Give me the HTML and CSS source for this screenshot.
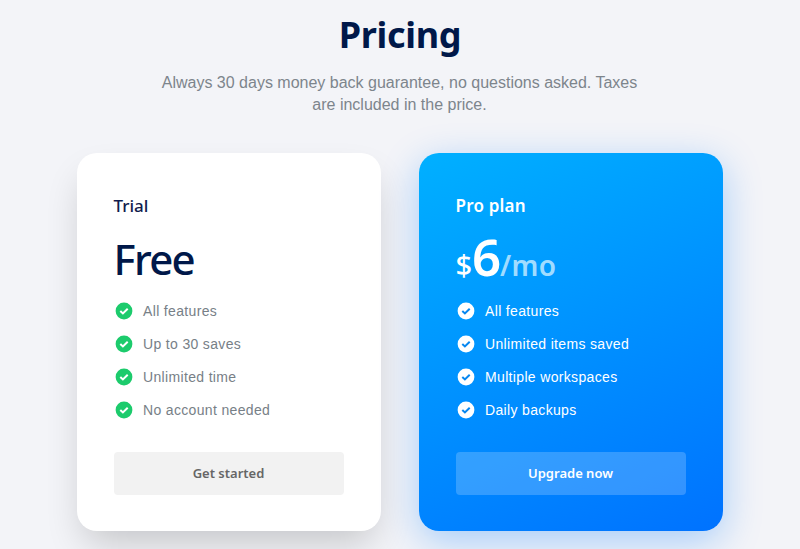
FILE: index.html
```html
<!DOCTYPE html>
<html lang="en">
  <head>
    <meta charset="UTF-8" />
    <meta name="viewport" content="width=device-width, initial-scale=1.0" />
    <title>Pricing</title>
    <link rel="stylesheet" href="styles.css">
  </head>
  <body>
    <svg width="0" height="0" class="sprite">
      <symbol id="check" viewBox="0 0 18 18">
        <circle cx="9" cy="9" r="8.4" fill="currentColor" />
        <path class="tick" d="M5.3 9l2.6 2.4 4.8-4.6" />
      </symbol>
    </svg>

    <div class="header">
      <h1>Pricing</h1>
      <p>Always 30 days money back guarantee, no questions asked. Taxes are included in the price.</p>
    </div>

    <div class="plans">
      <div class="card">
        <h2>Trial</h2>
        <div class="price">Free</div>
        <ul>
          <li><svg><use href="#check" /></svg>All features</li>
          <li><svg><use href="#check" /></svg>Up to 30 saves</li>
          <li><svg><use href="#check" /></svg>Unlimited time</li>
          <li><svg><use href="#check" /></svg>No account needed</li>
        </ul>
        <button class="btn">Get started</button>
      </div>

      <div class="card pro">
        <h2>Pro plan</h2>
        <div class="price"><span class="currency">$</span><span class="amount">6</span><span class="period">/mo</span></div>
        <ul>
          <li><svg><use href="#check" /></svg>All features</li>
          <li><svg><use href="#check" /></svg>Unlimited items saved</li>
          <li><svg><use href="#check" /></svg>Multiple workspaces</li>
          <li><svg><use href="#check" /></svg>Daily backups</li>
        </ul>
        <button class="btn">Upgrade now</button>
      </div>
    </div>
  </body>
</html>
```

FILE: styles.css
```css
* {
  box-sizing: border-box;
}
body {
  margin: 0;
  height: 549px;
  overflow: hidden;
  background-color: #f3f4f8;
  font-family: "Liberation Sans", Arial, sans-serif;
}
.sprite {
  position: absolute;
}
.header {
  height: 153.4px;
  padding-top: 10px;
  text-align: center;
}
h1 {
  margin: 0;
  color: #001849;
  font: bold 36px/50px "Noto Sans", sans-serif;
  letter-spacing: -0.3px;
}
.header p {
  width: 500px;
  margin: 12px auto 0;
  padding-right: 1px;
  color: #7d858c;
  font-size: 16px;
  line-height: 22px;
}
.plans {
  display: flex;
  justify-content: center;
  gap: 38px;
  padding-right: 1px;
}
.card {
  width: 304px;
  height: 378px;
  padding: 39px 37px 0;
  border-radius: 20px;
  background-color: white;
  box-shadow: 0 19px 38px -8px rgba(0, 0, 0, 0.2);
}
.card h2 {
  margin: 0;
  color: #101c4e;
  font: 500 17px/28px "Noto Sans", sans-serif;
}
.price {
  height: 60px;
  margin-top: 6px;
  color: #001849;
  font: 500 42px/66px "Noto Sans", sans-serif;
  letter-spacing: -1.7px;
  white-space: nowrap;
}
ul {
  list-style: none;
  margin: 8px 0 0;
  padding: 0;
}
li {
  display: flex;
  align-items: center;
  height: 33px;
  color: #778087;
  font-size: 14px;
  letter-spacing: 0.34px;
}
li svg {
  width: 18px;
  height: 18px;
  margin: 0 10.5px 0 1px;
  color: #1ccb6c;
}
.tick {
  fill: none;
  stroke: var(--tick, white);
  stroke-width: 2;
}
.btn {
  display: block;
  width: 230px;
  height: 43px;
  margin-top: 26px;
  padding: 0;
  border: none;
  border-radius: 4px;
  background-color: #f2f2f2;
  color: #666;
  font: 600 13px/43px "Noto Sans", sans-serif;
}
.pro {
  background: linear-gradient(155deg, #00b0ff, #0072ff);
  box-shadow: 0 10px 38px rgba(0, 120, 255, 0.32);
}
.pro h2,
.pro .price,
.pro li,
.pro li svg {
  color: white;
}
.pro h2 {
  font-weight: 600;
  letter-spacing: 0.2px;
}
.pro li svg {
  --tick: #0787f0;
}
.pro .price {
  line-height: 61px;
  letter-spacing: 0;
}
.currency {
  font-size: 29px;
}
.amount {
  font-size: 51px;
  font-weight: 600;
  letter-spacing: -1.2px;
}
.period {
  color: #a0dcff;
  font-size: 28px;
  font-weight: 600;
  letter-spacing: 0.3px;
}
.pro .btn {
  background-color: rgba(255, 255, 255, 0.2);
  color: white;
}
```
